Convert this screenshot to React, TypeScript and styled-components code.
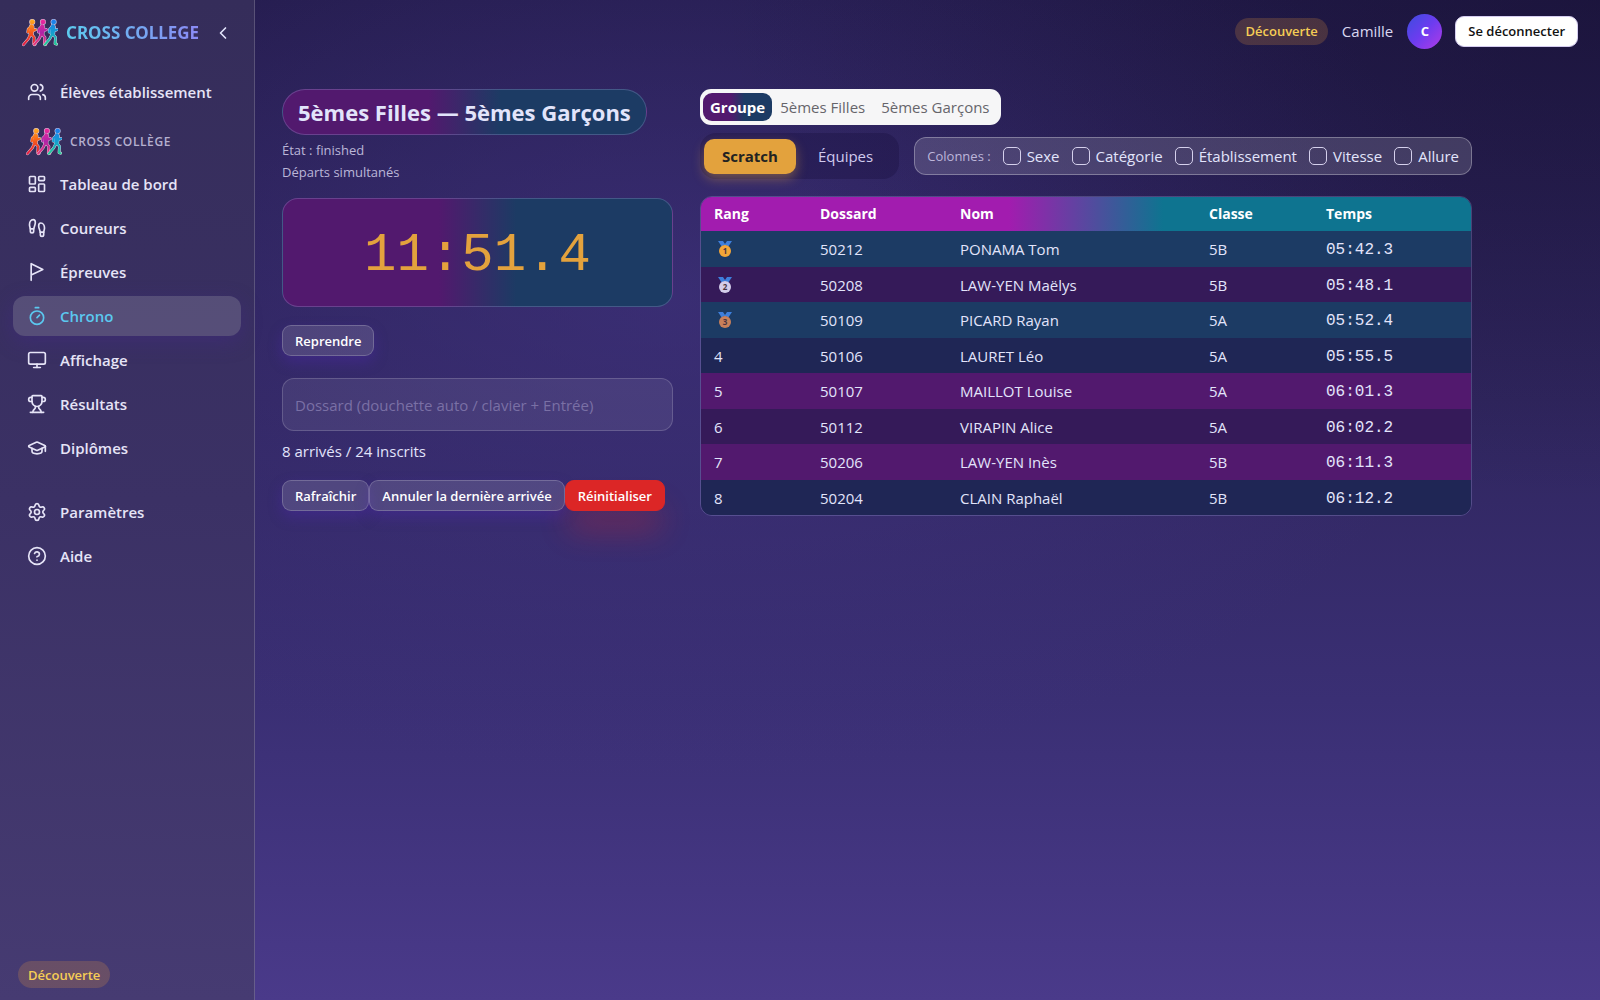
import React from 'react';
import styled, { createGlobalStyle, css } from 'styled-components';
import { Users, LayoutDashboard, Footprints, Timer, Monitor, Trophy, GraduationCap, Settings, ChevronLeft, CircleQuestionMark } from 'lucide-react';

const duo = 'linear-gradient(90deg, #52196e 0%, #52196e 40%, #1c3b64 60%, #1c3b64 100%)';

const Global = createGlobalStyle`
  *, *::before, *::after { box-sizing: border-box; }
  body {
    margin: 0;
    font-family: "Open Sans", "Noto Sans", sans-serif;
    font-size: 15px;
    line-height: 24px;
    color: #e2e4fb;
    background: #2e2560;
  }
  button, input { font: inherit; color: inherit; }
  h1, p { margin: 0; }
`;

const Page = styled.div`
  display: flex;
  min-height: 100vh;
  background:
    radial-gradient(ellipse 55% 50% at 100% 0%, rgba(18, 12, 42, 0.42), transparent),
    radial-gradient(ellipse 50% 48% at 42% 30%, rgba(66, 52, 132, 0.6), transparent),
    linear-gradient(180deg, #231b4b 0%, #30265f 40%, #3a2f74 70%, #4a3a8a 100%);
`;

const Sidebar = styled.aside`
  flex: 0 0 255px;
  min-width: 0;
  display: flex;
  flex-direction: column;
  padding: 10px 13px 12px;
  border-right: 1px solid rgba(255, 255, 255, 0.18);
  background: linear-gradient(180deg, #352d5a 0%, #3b3165 50%, #463b72 100%);
`;

const Brand = styled.div`
  display: flex;
  align-items: center;
  height: 46px;
  padding: 0 8px 0 9px;
  gap: 8px;
`;

const BrandName = styled.span`
  flex: 1;
  min-width: 0;
  font-family: "Noto Sans", sans-serif;
  font-size: 17px;
  font-weight: 700;
  white-space: nowrap;
  background: linear-gradient(90deg, #5ccbee, #8d87f5);
  background-clip: text;
  color: transparent;
`;

const Collapse = styled.button`
  display: flex;
  padding: 0;
  border: 0;
  background: none;
  color: #e2e4fb;
`;

const Nav = styled.nav`
  display: flex;
  flex-direction: column;
  flex: 1;
  padding-top: 16px;
`;

const NavLink = styled.a<{ $active?: boolean }>`
  display: flex;
  align-items: center;
  gap: 13px;
  height: 40px;
  margin-bottom: 4px;
  padding: 0 14px;
  border-radius: 12px;
  font-weight: 600;
  text-decoration: none;
  color: #e6e4f7;
  ${p => p.$active && css`
    color: #5bc8ef;
    background: rgba(255, 255, 255, 0.15);
    box-shadow: 0 6px 20px rgba(67, 40, 140, 0.4);
  `}
`;

const Section = styled.div`
  display: flex;
  align-items: center;
  gap: 8px;
  height: 44px;
  margin-bottom: 4px;
  padding: 8px 13px 0;
  font-size: 12px;
  font-weight: 600;
  letter-spacing: 0.05em;
  color: #b5b0cf;
`;

const Spacer = styled.div`
  height: 20px;
`;

const Plan = styled.span`
  display: inline-flex;
  align-items: center;
  align-self: flex-start;
  height: 27px;
  margin: 0 5px;
  padding: 0 10px;
  border-radius: 14px;
  font-size: 13px;
  font-weight: 600;
  color: #f6cd55;
  background: rgba(245, 158, 60, 0.2);
`;

const Main = styled.main`
  flex: 1;
  min-width: 0;
`;

const TopBar = styled.header`
  display: flex;
  align-items: center;
  justify-content: flex-end;
  height: 62px;
  padding: 0 22px;
`;

const User = styled.span`
  margin: 0 14px 0 9px;
  color: #d9d7f0;
`;

const Topped = styled(Plan)`
  align-self: center;
`;

const Avatar = styled.span`
  display: grid;
  place-items: center;
  width: 35px;
  height: 35px;
  margin-right: 13px;
  border-radius: 50%;
  font-size: 13px;
  font-weight: 700;
  color: #fff;
  background: linear-gradient(135deg, #4f46e5 20%, #6d3cf0 50%, #b13be6 100%);
`;

const Button = styled.button<{ $kind?: 'light' | 'danger' }>`
  height: 31px;
  padding: 0 12px;
  border: 1px solid rgba(255, 255, 255, 0.2);
  border-radius: 9px;
  font-size: 13px;
  line-height: 20px;
  font-weight: 600;
  white-space: nowrap;
  color: #fff;
  background: rgba(255, 255, 255, 0.13);
  box-shadow: 0 6px 14px rgba(80, 40, 180, 0.35);
  ${p => p.$kind === 'light' && css`
    color: #111;
    background: #fff;
    border-color: #d5cdf0;
    box-shadow: none;
  `}
  ${p => p.$kind === 'danger' && css`
    border-color: #dc2626;
    background: #dc2626;
    box-shadow: 0 24px 30px -4px rgba(220, 38, 38, 0.32);
  `}
`;

const Columns = styled.div`
  display: grid;
  grid-template-columns: 391px minmax(0, 772px);
  gap: 27px;
  padding: 27px;
  align-items: start;
`;

const Panel = styled.section`
  display: flex;
  flex-direction: column;
  align-items: flex-start;
`;

const Title = styled.h1`
  display: flex;
  align-items: center;
  height: 46px;
  padding: 0 15px;
  border: 1px solid rgba(160, 160, 220, 0.3);
  border-radius: 23px;
  font-size: 22px;
  font-weight: 700;
  white-space: nowrap;
  background: ${duo};
`;

const Meta = styled.p`
  font-size: 13px;
  line-height: 22px;
  color: #bbb6d8;
  &:first-of-type { margin-top: 4px; }
`;

const Clock = styled.div`
  display: grid;
  place-items: center;
  width: 100%;
  height: 109px;
  margin: 15px 0 18px;
  padding-top: 6px;
  border: 1px solid rgba(160, 160, 220, 0.3);
  border-radius: 16px;
  font: 54px "Liberation Mono", monospace;
  color: #e3a23d;
  background: ${duo};
`;

const Bib = styled.input`
  width: 100%;
  height: 53px;
  margin: 22px 0 8px;
  padding: 0 12px;
  border: 1px solid rgba(255, 255, 255, 0.17);
  border-radius: 12px;
  background: rgba(255, 255, 255, 0.08);
  &::placeholder { color: #7a70a5; opacity: 1; }
`;

const Actions = styled.div`
  display: flex;
  margin-top: 17px;
`;

const Tabs = styled.div`
  display: flex;
  align-items: center;
  height: 36px;
  padding: 0 3px;
  border-radius: 11px;
  background: #f6f6f7;
`;

const Tab = styled.button<{ $on?: boolean }>`
  height: 28px;
  padding: 0 8px;
  border: 0;
  border-radius: 9px;
  font-weight: 500;
  white-space: nowrap;
  color: #66656b;
  background: none;
  ${p => p.$on && css`
    padding: 0 7px;
    font-weight: 700;
    color: #fff;
    background: ${duo};
  `}
`;

const Controls = styled.div`
  display: flex;
  align-items: center;
  justify-content: space-between;
  width: 100%;
  margin: 8px 0 17px;
`;

const Modes = styled.div`
  display: flex;
  align-items: center;
  height: 46px;
  padding: 0 4px;
  border-radius: 16px;
  background: rgba(24, 14, 62, 0.34);
`;

const Mode = styled.button<{ $on?: boolean }>`
  height: 35px;
  padding: 0 22px;
  border: 0;
  border-radius: 10px;
  font-weight: 500;
  color: #d0cbee;
  background: none;
  ${p => p.$on && css`
    padding: 0 18px;
    font-weight: 700;
    color: #222;
    background: #e3a23d;
    box-shadow: 0 5px 12px rgba(227, 162, 61, 0.4);
  `}
`;

const Picker = styled.fieldset`
  display: flex;
  align-items: center;
  gap: 12px;
  height: 38px;
  margin: 0;
  padding: 0 12px;
  border: 1px solid rgba(255, 255, 255, 0.3);
  border-radius: 12px;
  background: rgba(255, 255, 255, 0.15);
`;

const PickerName = styled.span`
  font-size: 13px;
  font-weight: 500;
  white-space: nowrap;
  color: #bdb6da;
`;

const Option = styled.label`
  display: flex;
  align-items: center;
  gap: 6px;
  white-space: nowrap;
`;

const Check = styled.input`
  appearance: none;
  width: 18px;
  height: 18px;
  margin: 0;
  border: 1px solid #d5d0ec;
  border-radius: 5px;
`;

const Frame = styled.div`
  width: 100%;
  overflow: hidden;
  border: 1px solid rgba(160, 160, 220, 0.3);
  border-radius: 12px;
`;

const Table = styled.table`
  width: 100%;
  table-layout: fixed;
  border-collapse: separate;
  border-spacing: 0;
  text-align: left;
`;

const Head = styled.thead`
  background: linear-gradient(90deg, #a21caf 0%, #a21caf 40%, #0e7490 60%, #0e7490 100%);
`;

const Th = styled.th<{ $w?: number }>`
  width: ${p => (p.$w ? p.$w + 'px' : 'auto')};
  height: 34px;
  padding: 0 13px;
  font-size: 14px;
  font-weight: 700;
  color: #fff;
`;

const tones = { teal: '#1c3b64', plum: '#351a59', navy: '#1f2655', violet: '#52196e' };

const Row = styled.tr<{ $tone: keyof typeof tones }>`
  background: ${p => tones[p.$tone]};
`;

const Td = styled.td<{ $mono?: boolean }>`
  height: 36px;
  padding: 0 13px;
  white-space: nowrap;
  ${p => p.$mono && css`
    padding-top: 2px;
    font: 16px "Liberation Mono", monospace;
  `}
  tr:nth-child(even) > & { height: 35px; }
`;

const MedalArt = styled.svg`
  display: block;
  margin-left: 3px;
`;

function Medal({ place }: { place: number }) {
  const fill = ['#f3a638', '#d4cdea', '#c9805a'][place - 1];
  return (
    <MedalArt width="16" height="18" viewBox="0 0 16 18" role="img" aria-label={`Rang ${place}`}>
      <path d="M1 1h5l2 3 2-3h5l-4 6H5z" fill="#3e7fdc" />
      <path d="M6 5h4v2H6z" fill="#2c5fae" />
      <circle cx="8" cy="11" r="6" fill={fill} />
      <text x="8" y="14" fontSize="8" fontWeight="700" textAnchor="middle" fill="#4a3540">{place}</text>
    </MedalArt>
  );
}

const figures = [
  { x: 0, colors: ['#ffb020', '#f4581c', '#e01848'] },
  { x: 11, colors: ['#f0289a', '#b025a8', '#ee3b78'] },
  { x: 22, colors: ['#1f7cf0', '#149ed0', '#28cf90'] },
];

function Runners() {
  const id = React.useId();
  const limbs = 'M9.500 8L6.500 11L6 14M10.500 9L12 12.500L14 11.500M9 16L6.500 21L1.500 27M9.500 16L12.500 19.500L12 26L13.500 26.500';
  const torso = 'M9.500 7.500L10.800 8.500L10 16L8.500 15.500Z';
  return (
    <svg width="36" height="30" viewBox="0 0 37 30" fill="none" strokeLinecap="round" strokeLinejoin="round" aria-hidden="true">
      {figures.map((f, i) => (
        <g key={f.x} transform={`translate(${f.x} 0)`}>
          <linearGradient id={id + i} gradientUnits="userSpaceOnUse" x1="0" y1="1" x2="0" y2="28">
            {f.colors.map((c, n) => <stop key={c} offset={n / 2} stopColor={c} />)}
          </linearGradient>
          <g stroke="#e0cfe6">
            <circle cx="10.500" cy="3.600" r="2.300" strokeWidth="1.600" />
            <path d={torso} strokeWidth="4" />
            <path d={limbs} strokeWidth="3" />
          </g>
          <g stroke={`url(#${id + i})`} fill={`url(#${id + i})`}>
            <circle cx="10.500" cy="3.600" r="2.300" strokeWidth="0.600" />
            <path d={torso} strokeWidth="3" />
            <path d={limbs} strokeWidth="2.200" fill="none" />
          </g>
        </g>
      ))}
    </svg>
  );
}

function Pennant() {
  return (
    <svg width="20" height="20" viewBox="0 0 24 24" fill="none" stroke="currentColor" strokeWidth="2" strokeLinecap="round" strokeLinejoin="round" aria-hidden="true">
      <path d="M5 22V2l14 7-14 6.500" />
    </svg>
  );
}

const links = [
  { label: 'Tableau de bord', icon: LayoutDashboard },
  { label: 'Coureurs', icon: Footprints },
  { label: 'Épreuves', icon: Pennant },
  { label: 'Chrono', icon: Timer },
  { label: 'Affichage', icon: Monitor },
  { label: 'Résultats', icon: Trophy },
  { label: 'Diplômes', icon: GraduationCap },
];

const results: { bib: string; name: string; group: string; time: string; tone: keyof typeof tones }[] = [
  { bib: '50212', name: 'PONAMA Tom', group: '5B', time: '05:42.3', tone: 'teal' },
  { bib: '50208', name: 'LAW-YEN Maëlys', group: '5B', time: '05:48.1', tone: 'plum' },
  { bib: '50109', name: 'PICARD Rayan', group: '5A', time: '05:52.4', tone: 'teal' },
  { bib: '50106', name: 'LAURET Léo', group: '5A', time: '05:55.5', tone: 'navy' },
  { bib: '50107', name: 'MAILLOT Louise', group: '5A', time: '06:01.3', tone: 'violet' },
  { bib: '50112', name: 'VIRAPIN Alice', group: '5A', time: '06:02.2', tone: 'plum' },
  { bib: '50206', name: 'LAW-YEN Inès', group: '5B', time: '06:11.3', tone: 'violet' },
  { bib: '50204', name: 'CLAIN Raphaël', group: '5B', time: '06:12.2', tone: 'navy' },
];

export default function App() {
  return (
    <>
      <Global />
      <Page>
        <Sidebar>
          <Brand>
            <Runners />
            <BrandName>CROSS COLLEGE</BrandName>
            <Collapse aria-label="Réduire le menu"><ChevronLeft size={20} /></Collapse>
          </Brand>
          <Nav>
            <NavLink href="#eleves"><Users size={20} />Élèves établissement</NavLink>
            <Section><Runners />CROSS COLLÈGE</Section>
            {links.map(({ label, icon: Icon }) => (
              <NavLink key={label} href={'#' + label} $active={label === 'Chrono'}><Icon size={20} />{label}</NavLink>
            ))}
            <Spacer />
            <NavLink href="#parametres"><Settings size={20} />Paramètres</NavLink>
            <NavLink href="#aide"><CircleQuestionMark size={20} />Aide</NavLink>
          </Nav>
          <Plan>Découverte</Plan>
        </Sidebar>
        <Main>
          <TopBar>
            <Topped>Découverte</Topped>
            <User>Camille</User>
            <Avatar>C</Avatar>
            <Button $kind="light">Se déconnecter</Button>
          </TopBar>
          <Columns>
            <Panel>
              <Title>5èmes Filles — 5èmes Garçons</Title>
              <Meta>État : finished</Meta>
              <Meta>Départs simultanés</Meta>
              <Clock>11:51.4</Clock>
              <Button>Reprendre</Button>
              <Bib aria-label="Dossard" placeholder="Dossard (douchette auto / clavier + Entrée)" />
              <p>8 arrivés / 24 inscrits</p>
              <Actions>
                <Button>Rafraîchir</Button>
                <Button>Annuler la dernière arrivée</Button>
                <Button $kind="danger">Réinitialiser</Button>
              </Actions>
            </Panel>
            <Panel>
              <Tabs>
                <Tab $on>Groupe</Tab>
                <Tab>5èmes Filles</Tab>
                <Tab>5èmes Garçons</Tab>
              </Tabs>
              <Controls>
                <Modes>
                  <Mode $on>Scratch</Mode>
                  <Mode>Équipes</Mode>
                </Modes>
                <Picker aria-label="Colonnes">
                  <PickerName>Colonnes :</PickerName>
                  {['Sexe', 'Catégorie', 'Établissement', 'Vitesse', 'Allure'].map(name => (
                    <Option key={name}><Check type="checkbox" />{name}</Option>
                  ))}
                </Picker>
              </Controls>
              <Frame>
                <Table>
                  <Head>
                    <tr>
                      <Th $w={106}>Rang</Th>
                      <Th $w={140}>Dossard</Th>
                      <Th>Nom</Th>
                      <Th $w={117}>Classe</Th>
                      <Th $w={158}>Temps</Th>
                    </tr>
                  </Head>
                  <tbody>
                    {results.map((r, i) => (
                      <Row key={r.bib} $tone={r.tone}>
                        <Td>{i < 3 ? <Medal place={i + 1} /> : i + 1}</Td>
                        <Td>{r.bib}</Td>
                        <Td>{r.name}</Td>
                        <Td>{r.group}</Td>
                        <Td $mono>{r.time}</Td>
                      </Row>
                    ))}
                  </tbody>
                </Table>
              </Frame>
            </Panel>
          </Columns>
        </Main>
      </Page>
    </>
  );
}
